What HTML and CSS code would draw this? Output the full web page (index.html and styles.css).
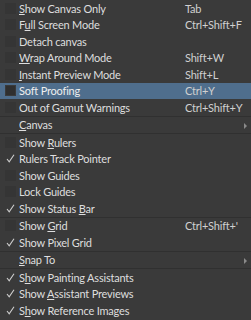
FILE: index.html
```html
<!DOCTYPE html>
<html lang="en">
<head>
    <meta charset="UTF-8">
    <meta name="viewport" content="width=device-width, initial-scale=1.0">
    <title>View Menu</title>
    <link rel="stylesheet" href="styles.css">
</head>
<body>
    <div class="menu">
        <div class="item"><span class="box"></span><span class="label"><u>S</u>how Canvas Only</span><span class="keys">Tab</span></div>
        <div class="item"><span class="box"></span><span class="label">F<u>u</u>ll Screen Mode</span><span class="keys">Ctrl+Shift+F</span></div>
        <div class="item"><span class="box"></span><span class="label">Detach canvas</span><span class="keys"></span></div>
        <div class="item"><span class="box"></span><span class="label"><u>W</u>rap Around Mode</span><span class="keys">Shift+W</span></div>
        <div class="item"><span class="box"></span><span class="label"><u>I</u>nstant Preview Mode</span><span class="keys">Shift+L</span></div>
        <div class="item active"><span class="box"></span><span class="label">Soft Proofing</span><span class="keys">Ctrl+Y</span></div>
        <div class="item"><span class="box"></span><span class="label">Out of Gamut Warnings</span><span class="keys">Ctrl+Shift+Y</span></div>
        <div class="sep"></div>
        <div class="item"><span class="none"></span><span class="label"><u>C</u>anvas</span><span class="keys"><span class="arrow"></span></span></div>
        <div class="sep"></div>
        <div class="item"><span class="box"></span><span class="label">Show <u>R</u>ulers</span><span class="keys"></span></div>
        <div class="item"><span class="tick"><svg width="9" height="9" viewBox="0 0 9 9"><path d="M1 5 L3.2 7.8 L8 0.8" fill="none" stroke="#cfcfcf" stroke-width="1.1"/></svg></span><span class="label">Rulers Track Pointer</span><span class="keys"></span></div>
        <div class="item"><span class="box"></span><span class="label">Show Guides</span><span class="keys"></span></div>
        <div class="item"><span class="box"></span><span class="label">Lock Guides</span><span class="keys"></span></div>
        <div class="item"><span class="tick"><svg width="9" height="9" viewBox="0 0 9 9"><path d="M1 5 L3.2 7.8 L8 0.8" fill="none" stroke="#cfcfcf" stroke-width="1.1"/></svg></span><span class="label">Show Status <u>B</u>ar</span><span class="keys"></span></div>
        <div class="sep"></div>
        <div class="item"><span class="box"></span><span class="label">Show <u>G</u>rid</span><span class="keys">Ctrl+Shift+'</span></div>
        <div class="item"><span class="tick"><svg width="9" height="9" viewBox="0 0 9 9"><path d="M1 5 L3.2 7.8 L8 0.8" fill="none" stroke="#cfcfcf" stroke-width="1.1"/></svg></span><span class="label">Show Pixel Grid</span><span class="keys"></span></div>
        <div class="sep"></div>
        <div class="item"><span class="none"></span><span class="label"><u>S</u>nap To</span><span class="keys"><span class="arrow"></span></span></div>
        <div class="sep"></div>
        <div class="item"><span class="tick"><svg width="9" height="9" viewBox="0 0 9 9"><path d="M1 5 L3.2 7.8 L8 0.8" fill="none" stroke="#cfcfcf" stroke-width="1.1"/></svg></span><span class="label">S<u>h</u>ow Painting Assistants</span><span class="keys"></span></div>
        <div class="item"><span class="tick"><svg width="9" height="9" viewBox="0 0 9 9"><path d="M1 5 L3.2 7.8 L8 0.8" fill="none" stroke="#cfcfcf" stroke-width="1.1"/></svg></span><span class="label">Show <u>A</u>ssistant Previews</span><span class="keys"></span></div>
        <div class="item"><span class="tick"><svg width="9" height="9" viewBox="0 0 9 9"><path d="M1 5 L3.2 7.8 L8 0.8" fill="none" stroke="#cfcfcf" stroke-width="1.1"/></svg></span><span class="label">S<u>h</u>ow Reference Images</span><span class="keys"></span></div>
    </div>
</body>
</html>
```

FILE: styles.css
```css
body {
    margin: 0;
    background-color: #3a3a3a;
    font-family: Lato, "Open Sans", sans-serif;
    font-size: 11px;
    letter-spacing: -0.2px;
    color: #dedede;
}
.menu {
    width: 251px;
    height: 320px;
    overflow: hidden;
}
.item {
    display: flex;
    align-items: center;
    height: 16.5px;
    white-space: nowrap;
}
.item.active {
    background-color: #4f6e8d;
    color: #eeeeee;
}
.box, .none, .tick {
    width: 11px;
    height: 11px;
    margin-left: 5px;
    margin-right: 3px;
    flex: none;
}
.box {
    background-color: #353535;
}
.active .box {
    background-color: #2f2f2f;
    box-shadow: inset 0 0 0 1px #3a3a3a;
}
.tick {
    display: flex;
    align-items: center;
    justify-content: center;
}
.label {
    flex: 1;
    overflow: hidden;
}
.label u {
    text-underline-offset: 1px;
}
.keys {
    width: 66px;
    flex: none;
    color: #d0d0d0;
    position: relative;
    height: 100%;
    display: flex;
    align-items: center;
}
.arrow {
    position: absolute;
    right: 4px;
    top: 6px;
    border-left: 3px solid #8a8a8a;
    border-top: 3px solid transparent;
    border-bottom: 3px solid transparent;
}
.sep {
    height: 1px;
    background-color: #303030;
}
```
